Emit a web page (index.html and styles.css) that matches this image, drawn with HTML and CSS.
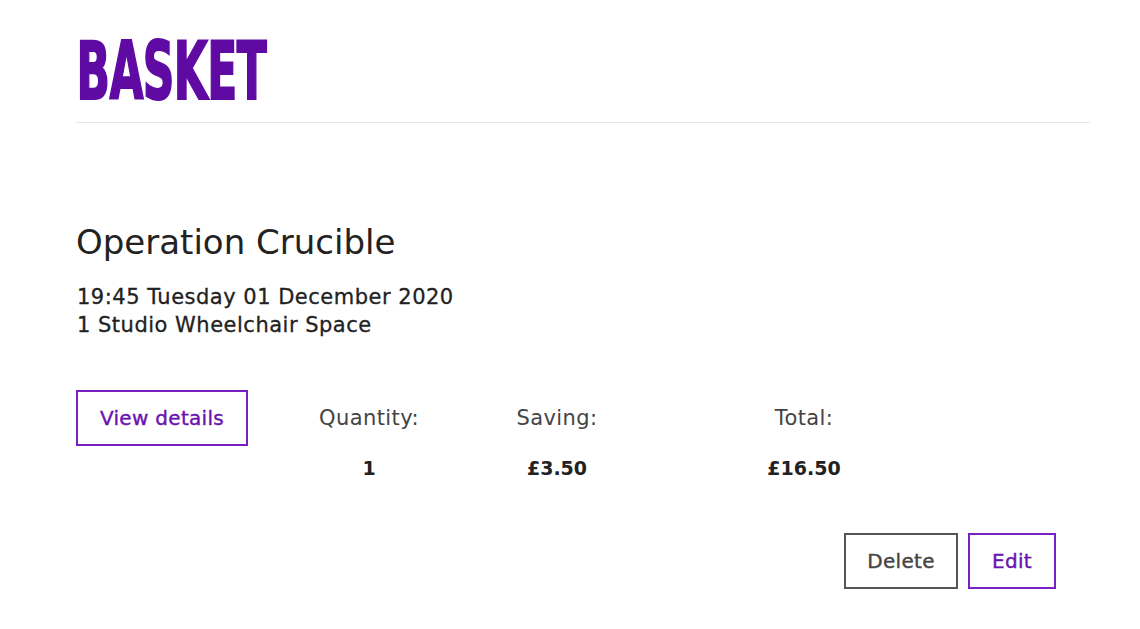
FILE: index.html
```html
<!DOCTYPE html>
<html lang="en">
<head>
    <meta charset="UTF-8">
    <meta name="viewport" content="width=device-width, initial-scale=1.0">
    <title>Basket</title>
    <link rel="stylesheet" href="styles.css">
</head>
<body>
    <div class="page">
        <header class="page-header">
            <h1>BASKET</h1>
        </header>
        <div class="basket-item">
            <h2>Operation Crucible</h2>
            <p class="item-meta">19:45 Tuesday 01 December 2020<br>1 Studio Wheelchair Space</p>
            <div class="item-summary">
                <div class="summary-action">
                    <button class="btn btn-purple">View details</button>
                </div>
                <div class="summary-col qty">
                    <span class="summary-label">Quantity:</span>
                    <span class="summary-value">1</span>
                </div>
                <div class="summary-col saving">
                    <span class="summary-label">Saving:</span>
                    <span class="summary-value">&pound;3.50</span>
                </div>
                <div class="summary-col total">
                    <span class="summary-label">Total:</span>
                    <span class="summary-value">&pound;16.50</span>
                </div>
            </div>
            <div class="item-actions">
                <button class="btn btn-grey">Delete</button>
                <button class="btn btn-purple">Edit</button>
            </div>
        </div>
    </div>
</body>
</html>
```
FILE: styles.css
```css
body {
    font-family: "DejaVu Sans", Arial, sans-serif;
    background-color: #fff;
    color: #222;
    margin: 0;
    padding: 0;
}
.page {
    width: 1014px;
    margin-left: 76px;
}
.page-header {
    border-bottom: 1px solid #e6e6e6;
    padding-top: 33px;
    padding-bottom: 11px;
}
h1 {
    display: inline-block;
    font-family: "DejaVu Sans Condensed", sans-serif;
    font-weight: bold;
    font-size: 80px;
    line-height: 78px;
    letter-spacing: -1px;
    color: #5e0aa3; /* Purple */
    margin: 0;
    padding-left: 1px;
    transform: scaleX(0.61);
    transform-origin: left center;
    -webkit-text-stroke: 2px #5e0aa3;
}
.basket-item {
    padding-top: 99px;
}
h2 {
    font-size: 34px;
    font-weight: normal;
    line-height: 40px;
    margin: 0 0 21px 0;
    color: #222;
}
.item-meta {
    font-size: 21px;
    line-height: 28px;
    letter-spacing: 0.5px;
    margin: 0 0 0 1px;
    -webkit-text-stroke: 0.3px #222;
}
.item-summary {
    display: grid;
    grid-template-columns: 204px 178px 198px 296px;
    margin-top: 51px;
}
.summary-col {
    display: flex;
    flex-direction: column;
    align-items: center;
    gap: 24px;
    padding-top: 15px;
    font-size: 21px;
    letter-spacing: 0.4px;
}
.summary-label {
    color: #444;
    line-height: 26px;
}
.summary-value {
    font-size: 19px;
    letter-spacing: 0;
    font-weight: bold;
    line-height: 26px;
    color: #222;
}
.btn {
    font-family: inherit;
    font-size: 20px;
    letter-spacing: 0.3px;
    background: #fff;
    padding: 0;
    height: 56px;
    cursor: pointer;
    -webkit-text-stroke: 0.4px currentColor;
}
.btn-purple {
    border: 2px solid #7a1fc2;
    color: #6a14b0;
}
.btn-grey {
    border: 2px solid #555;
    color: #444;
}
.summary-action .btn {
    width: 172px;
}
.item-actions {
    display: flex;
    justify-content: flex-end;
    gap: 10px;
    margin-top: 52px;
    padding-right: 34px;
}
.item-actions .btn-grey {
    width: 114px;
}
.item-actions .btn-purple {
    width: 88px;
}
```
